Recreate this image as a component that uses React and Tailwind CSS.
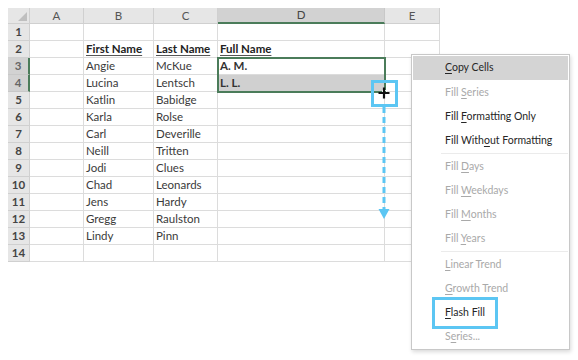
import React from "react";

const data = [
  ["", "", ""],
  ["First Name", "Last Name", "Full Name"],
  ["Angie", "McKue", "A. M."],
  ["Lucina", "Lentsch", "L. L."],
  ["Katlin", "Babidge", ""],
  ["Karla", "Rolse", ""],
  ["Carl", "Deverille", ""],
  ["Neill", "Tritten", ""],
  ["Jodi", "Clues", ""],
  ["Chad", "Leonards", ""],
  ["Jens", "Hardy", ""],
  ["Gregg", "Raulston", ""],
  ["Lindy", "Pinn", ""],
  ["", "", ""],
];

function U({ pre, u, post }) {
  return (
    <span>
      {pre}
      <span className="underline underline-offset-2">{u}</span>
      {post}
    </span>
  );
}

const items = [
  { t: ["", "C", "opy Cells"], on: true, hl: true },
  { t: ["Fill ", "S", "eries"], on: false },
  { t: ["Fill ", "F", "ormatting Only"], on: true },
  { t: ["Fill With", "o", "ut Formatting"], on: true, sep: true },
  { t: ["Fill ", "D", "ays"], on: false },
  { t: ["Fill ", "W", "eekdays"], on: false },
  { t: ["Fill ", "M", "onths"], on: false },
  { t: ["Fill ", "Y", "ears"], on: false, sep: true },
  { t: ["", "L", "inear Trend"], on: false },
  { t: ["", "G", "rowth Trend"], on: false },
  { t: ["", "F", "lash Fill"], on: true, box: true },
  { t: ["S", "e", "ries..."], on: false },
];

export default function App() {
  return (
    <div
      className="relative w-[578px] h-[360px] bg-white overflow-hidden"
      style={{ fontFamily: "Lato, 'Open Sans', sans-serif" }}
    >
      <div className="pt-[8px] pl-[8px]">
        <div className="grid grid-cols-[22px_54px_70px_64px_167px_55px] grid-rows-[16px_repeat(14,17px)] text-[11.5px] text-[#3a3a3a]">
          {/* header row */}
          <div className="relative bg-[#e6e6e6] border-r border-b border-[#d0d0d0]">
            <div className="absolute right-[2px] bottom-[2px] w-0 h-0 border-l-[9px] border-l-transparent border-b-[9px] border-b-[#bfbfbf]" />
          </div>
          {["A", "B", "C", "D", "E"].map((c) => (
            <div
              key={c}
              className={
                c === "D"
                  ? "flex items-center justify-center bg-[#d2d2d2] border-r border-[#c8c8c8] border-b-2 border-b-[#4b7c5a] text-[#444]"
                  : "flex items-center justify-center bg-[#e6e6e6] border-r border-b border-[#d0d0d0] text-[#555]"
              }
            >
              {c}
            </div>
          ))}
          {data.map((row, i) => {
            const r = i + 1;
            const sel = r === 3 || r === 4;
            return (
              <React.Fragment key={r}>
                <div
                  className={
                    sel
                      ? "flex items-center justify-center bg-[#d2d2d2] border-b border-[#c8c8c8] border-r-2 border-r-[#4b7c5a] text-[#666] font-bold"
                      : "flex items-center justify-center bg-[#e6e6e6] border-r border-b border-[#d0d0d0] text-[#444] font-bold"
                  }
                >
                  {r}
                </div>
                <div className="border-r border-b border-[#dcdcdc]" />
                {row.map((v, j) => (
                  <div
                    key={j}
                    className={
                      "flex items-center pl-[2px] border-r border-b border-[#dcdcdc] whitespace-nowrap overflow-hidden " +
                      (r === 2 ? "font-bold text-[#222] " : "") +
                      (r === 4 && j === 2 ? "bg-[#d0d0d0] " : "")
                    }
                  >
                    {r === 2 ? (
                      <span className="underline underline-offset-2 decoration-[#555]">{v}</span>
                    ) : (
                      <span className={j === 2 ? "font-bold text-[#333]" : ""}>{v}</span>
                    )}
                  </div>
                ))}
                <div className="border-r border-b border-[#dcdcdc]" />
              </React.Fragment>
            );
          })}
        </div>
      </div>

      {/* selection border D3:D4 */}
      <div className="absolute left-[217px] top-[57px] w-[169px] h-[36px] border-2 border-[#4b7c5a] pointer-events-none" />
      <div className="absolute left-[382px] top-[90px] w-[5px] h-[5px] bg-[#4b7c5a] border border-white" />

      {/* fill handle highlight box + drag arrow */}
      <div className="absolute left-[371px] top-[80px] w-[27px] h-[27px] border-[3px] border-[#5cc6f3]" />
      <svg className="absolute left-[371px] top-[80px]" width="60" height="150" viewBox="0 0 60 150">
        <path d="M13 7.5v11M7.5 13h11" stroke="#111" strokeWidth="2.2" fill="none" />
        <line x1="13" y1="27" x2="13" y2="130" stroke="#5cc6f3" strokeWidth="3" strokeDasharray="6 4" />
        <polygon points="7.5,129 18.5,129 13,139" fill="#5cc6f3" />
      </svg>

      {/* context menu */}
      <div className="absolute left-[411px] top-[54px] w-[159px] h-[296px] bg-white border border-[#c8c8c8] shadow-[1px_2px_4px_rgba(0,0,0,0.15)] pt-[1px] px-[1px] text-[10.5px]">
        {items.map((it, i) => (
          <React.Fragment key={i}>
            <div
              className={
                "relative h-[24px] flex items-center pl-[32px] whitespace-nowrap " +
                (it.on ? "text-[#262626] " : "text-[#a9a9a9] ") +
                (it.hl ? "bg-[#d4d4d4] h-[23px] mb-[1px] " : "")
              }
            >
              {it.box && (
                <div className="absolute left-[19px] top-[-4px] w-[66px] h-[32px] border-[3px] border-[#5cc6f3]" />
              )}
              <span className="relative">
                <U pre={it.t[0]} u={it.t[1]} post={it.t[2]} />
              </span>
            </div>
            {it.sep && <div className="ml-[28px] h-[2px] border-t border-[#ebebeb]" />}
          </React.Fragment>
        ))}
      </div>
    </div>
  );
}
